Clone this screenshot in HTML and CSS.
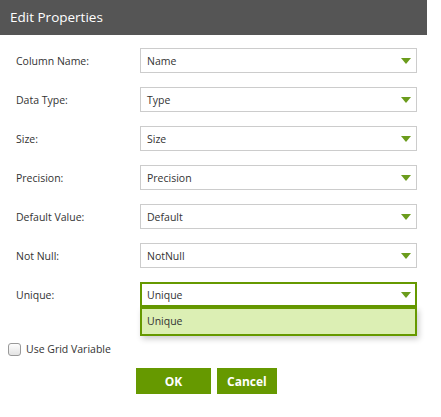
FILE: index.html
```html
<!DOCTYPE html>
<html lang="en">
<head>
    <meta charset="UTF-8">
    <title>Edit Properties</title>
    <link rel="stylesheet" href="styles.css">
</head>
<body>
    <div class="dialog">
        <div class="dialog-header">Edit Properties</div>

        <div class="form">
            <div class="row">
                <label class="label">Column Name:</label>
                <div class="select"><span>Name</span><i class="arrow"></i></div>
            </div>
            <div class="row">
                <label class="label">Data Type:</label>
                <div class="select"><span>Type</span><i class="arrow"></i></div>
            </div>
            <div class="row">
                <label class="label">Size:</label>
                <div class="select"><span>Size</span><i class="arrow"></i></div>
            </div>
            <div class="row">
                <label class="label">Precision:</label>
                <div class="select"><span>Precision</span><i class="arrow"></i></div>
            </div>
            <div class="row">
                <label class="label">Default Value:</label>
                <div class="select"><span>Default</span><i class="arrow"></i></div>
            </div>
            <div class="row">
                <label class="label">Not Null:</label>
                <div class="select"><span>NotNull</span><i class="arrow"></i></div>
            </div>
            <div class="row">
                <label class="label">Unique:</label>
                <div class="select open">
                    <span>Unique</span><i class="arrow"></i>
                    <ul class="options">
                        <li class="selected">Unique</li>
                    </ul>
                </div>
            </div>
        </div>

        <label class="check">
            <span class="box"></span>
            Use Grid Variable
        </label>

        <div class="buttons">
            <button class="btn ok">OK</button>
            <button class="btn">Cancel</button>
        </div>
    </div>
</body>
</html>
```

FILE: styles.css
```css
body {
    margin: 0;
    background: #fff;
    font-family: "Open Sans", Arial, sans-serif;
    color: #333;
}
.dialog {
    width: 427px;
}
.dialog-header {
    height: 35px;
    line-height: 34px;
    padding-left: 10px;
    background: #555;
    color: #fff;
    font-size: 13.5px;
}
.form {
    padding: 13px 0 0 16px;
    display: flex;
    flex-direction: column;
    gap: 14px;
}
.row {
    display: flex;
    align-items: center;
    height: 25px;
}
.label {
    width: 124px;
    font-size: 10.5px;
    color: #333;
}
.select {
    position: relative;
    box-sizing: border-box;
    width: 277px;
    height: 25px;
    border: 1px solid #ccc;
    display: flex;
    align-items: center;
    padding-left: 6px;
    font-size: 10.5px;
    color: #333;
    background: #fff;
}
.select.open {
    border: 1px solid #669900;
    outline: 1px solid #669900;
    outline-offset: -2px;
}
.arrow {
    position: absolute;
    right: 5px;
    top: 9px;
    width: 0;
    height: 0;
    border-left: 5px solid transparent;
    border-right: 5px solid transparent;
    border-top: 6px solid #6b9c1c;
}
.options {
    position: absolute;
    left: -1px;
    right: -1px;
    top: 24px;
    margin: 0;
    padding: 0;
    list-style: none;
    border: 2px solid #669900;
    background: #dcefb4;
    box-shadow: 2px 3px 6px rgba(0, 0, 0, 0.2);
    box-sizing: border-box;
}
.options li {
    height: 25px;
    line-height: 25px;
    padding-left: 5px;
    font-size: 10.5px;
}
.check {
    display: flex;
    align-items: center;
    gap: 5px;
    margin: 35px 0 0 8px;
    font-size: 10.5px;
    color: #333;
}
.box {
    box-sizing: border-box;
    width: 13px;
    height: 13px;
    border: 1px solid #999;
    border-radius: 3px;
    background: linear-gradient(#fdfdfd, #e3e3e3);
}
.buttons {
    display: flex;
    gap: 6px;
    margin: 12px 0 0 136px;
}
.btn {
    height: 26px;
    border: none;
    background: #669900;
    color: #fff;
    font-family: "Open Sans", Arial, sans-serif;
    font-weight: bold;
    font-size: 12px;
    padding: 0 10px;
    cursor: pointer;
}
.btn.ok {
    width: 75px;
}
```
